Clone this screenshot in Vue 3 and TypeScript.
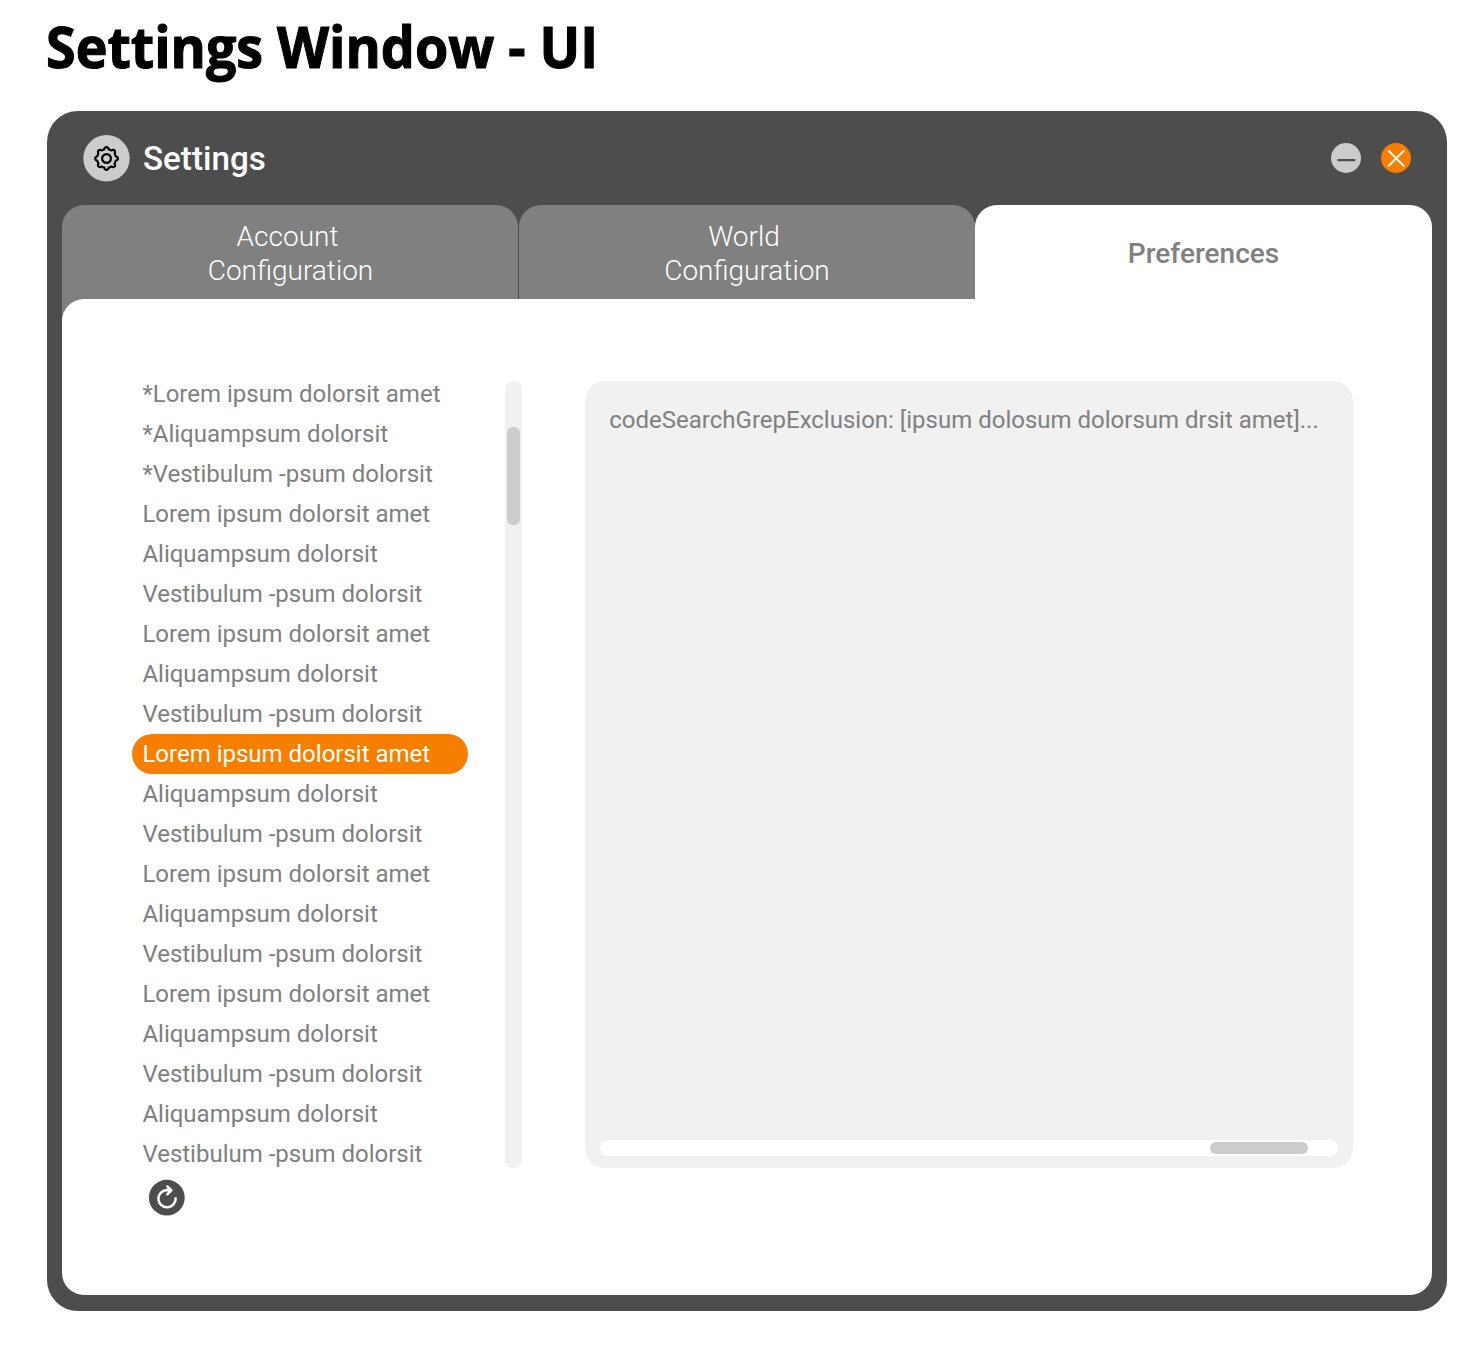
<script setup lang="ts">
import { ref } from 'vue'

interface Tab {
  id: string
  lines: string[]
}

const tabs: Tab[] = [
  { id: 'account', lines: ['Account', 'Configuration'] },
  { id: 'world', lines: ['World', 'Configuration'] },
  { id: 'preferences', lines: ['Preferences'] },
]
const activeTab = ref('preferences')

const L = 'Lorem ipsum dolorsit amet'
const A = 'Aliquampsum dolorsit'
const V = 'Vestibulum -psum dolorsit'
const items: string[] = [
  '*' + L, '*' + A, '*' + V,
  L, A, V, L, A, V, L, A, V, L, A, V, L, A, V, A, V,
]
const selected = ref(9)

// Eight rounded teeth joined by shallow notches.
function gearPath(): string {
  const pt = (r: number, deg: number): string => {
    const a = (deg * Math.PI) / 180
    return `${(r * Math.cos(a)).toFixed(2)} ${(r * Math.sin(a)).toFixed(2)}`
  }
  let d = `M${pt(9.4, -22.5)}`
  for (let k = 0; k < 8; k++) {
    const c = k * 45
    d += `Q${pt(9.1, c - 12)} ${pt(10.6, c - 9)}Q${pt(12.4, c)} ${pt(10.6, c + 9)}Q${pt(9.1, c + 12)} ${pt(9.4, c + 22.5)}`
  }
  return d + 'Z'
}
const gear = gearPath()
</script>

<template>
  <main class="page">
    <svg class="headline" width="560" height="80" role="heading">
      <text x="-1" y="58" textLength="552" lengthAdjust="spacingAndGlyphs">Settings Window - UI</text>
    </svg>

    <section class="window">
      <header class="bar">
        <svg class="gear" width="47" height="47" viewBox="-23.5 -23.5 47 47">
          <circle cy="-0.2" r="23.2" fill="#ccc" />
          <path :d="gear" fill="none" stroke="#000" stroke-width="2.2" stroke-linejoin="round" />
          <circle r="4.4" fill="none" stroke="#000" stroke-width="2.2" />
        </svg>
        <h2 class="title">Settings</h2>
        <button class="ctl" aria-label="Minimize">
          <svg width="30" height="30" viewBox="0 0 30 30">
            <circle cx="15" cy="15" r="15" fill="#ccc" />
            <path d="M7.4 17.1H23.4" stroke="#4d4d4d" stroke-width="2.2" stroke-linecap="round" />
          </svg>
        </button>
        <button class="ctl" aria-label="Close">
          <svg width="30" height="30" viewBox="0 0 30 30">
            <circle cx="15" cy="15" r="15" fill="#f77f00" />
            <path d="M7.7 7.9L22.7 22.9M22.7 7.9L7.7 22.9" stroke="#fff" stroke-width="2" stroke-linecap="round" />
          </svg>
        </button>
      </header>

      <nav class="tabs">
        <button
          v-for="tab in tabs"
          :key="tab.id"
          class="tab"
          :class="[tab.id, { active: tab.id === activeTab }]"
          @click="activeTab = tab.id"
        >
          <span v-for="line in tab.lines" :key="line">{{ line }}</span>
        </button>
      </nav>

      <div class="body">
        <div class="left">
          <div class="scroller">
            <ul class="list">
              <li
                v-for="(item, i) in items"
                :key="i"
                :class="{ selected: i === selected }"
                @click="selected = i"
              >{{ item }}</li>
            </ul>
            <div class="track-v"><div class="thumb-v"></div></div>
          </div>
          <button class="refresh" aria-label="Refresh">
            <svg width="36" height="36" viewBox="0 0 36 36">
              <circle cx="17.8" cy="17.7" r="17.9" fill="#4d4d4d" />
              <path
                d="M26.6 18.4A8.6 8.6 0 1 1 18 10.1H21.5M18.3 6.5L22.3 10.3L18.3 14.4"
                fill="none" stroke="#fff" stroke-width="2.6" stroke-linecap="round" stroke-linejoin="round"
              />
            </svg>
          </button>
        </div>
        <div class="panel">
          <p class="code">codeSearchGrepExclusion: [ipsum dolosum dolorsum drsit amet]...</p>
          <div class="track-h"><div class="thumb-h"></div></div>
        </div>
      </div>
    </section>
  </main>
</template>

<style>
body {
  background: #fff;
}
</style>

<style scoped>
.page {
  box-sizing: border-box;
  width: 1478px;
  height: 1360px;
  padding: 10px 31px 0 47px;
  font-family: Roboto, "Liberation Sans", sans-serif;
}
.headline {
  display: block;
  height: 101px;
  overflow: visible;
}
.headline text {
  font: 700 57px "Open Sans", "Noto Sans", sans-serif;
  stroke: #000;
  stroke-width: 1.1px;
}
.window {
  box-sizing: border-box;
  width: 1400px;
  height: 1200px;
  padding: 0 15px 16px;
  border-radius: 31px;
  background: #4d4d4d;
  display: flex;
  flex-direction: column;
}
.bar {
  height: 94px;
  padding: 0 21px;
  display: flex;
  align-items: center;
}
.gear {
  flex: none;
}
.title {
  flex: 1;
  margin: 1px 0 0 13px;
  color: #fff;
  font-size: 33.2px;
  font-weight: 500;
  line-height: 40px;
}
button {
  border: 0;
  padding: 0;
  margin: 0;
  background: none;
  font: inherit;
  cursor: pointer;
}
button svg {
  display: block;
}
.refresh svg {
  overflow: visible;
}
.ctl {
  margin-left: 20px;
}
.tabs {
  display: flex;
  flex: none;
  height: 94px;
}
.tab {
  flex: 0 0 456px;
  display: flex;
  flex-direction: column;
  align-items: center;
  justify-content: center;
  border-radius: 22px 22px 0 0;
  background: #808080;
  color: #fff;
  font-size: 28px;
  font-weight: 300;
  line-height: 34px;
  padding-top: 4px;
}
.tab:not(.active) span:first-child {
  margin-right: 6px;
}
.tab.account {
  margin-right: 1px;
  padding-left: 1px;
  box-shadow: 0 22px 0 #808080;
}
.tab.active {
  flex: 1;
  background: #fff;
  color: #808080;
  font-weight: 500;
}
.body {
  position: relative;
  box-sizing: border-box;
  flex: 1;
  display: flex;
  padding: 75px 79px 0 70px;
  border-radius: 22px 0 22px 22px;
  background: #fff;
  color: #808080;
  font-size: 24px;
}
.left {
  width: 389.5px;
}
.scroller {
  display: flex;
  justify-content: space-between;
}
.list {
  width: 335.5px;
  margin: 0;
  padding: 0;
  list-style: none;
}
.list li {
  height: 40px;
  padding-left: 10.4px;
  border-radius: 20px;
  line-height: 40px;
  white-space: nowrap;
}
.list .selected {
  background: #f77f00;
  color: #fff;
}
.track-v {
  box-sizing: border-box;
  width: 16.5px;
  height: 787px;
  margin-top: 7px;
  padding: 46px 2px 0;
  border-radius: 8px;
  background: #f1f1f1;
}
.thumb-v {
  height: 98px;
  border-radius: 6px;
  background: #ccc;
}
.refresh {
  display: block;
  margin: 6px 0 0 17px;
}
.panel {
  box-sizing: border-box;
  width: 768px;
  height: 787px;
  margin: 7px 0 0 63px;
  padding: 19px 15px 12px;
  display: flex;
  flex-direction: column;
  justify-content: space-between;
  border-radius: 20px;
  background: #f1f1f1;
}
.code {
  margin: 0 0 0 9.8px;
  line-height: 40px;
  white-space: nowrap;
}
.track-h {
  box-sizing: border-box;
  height: 16px;
  padding: 2px 30px 2px 0;
  display: flex;
  justify-content: flex-end;
  border-radius: 8px;
  background: #fff;
}
.thumb-h {
  width: 98px;
  border-radius: 6px;
  background: #ccc;
}
</style>
